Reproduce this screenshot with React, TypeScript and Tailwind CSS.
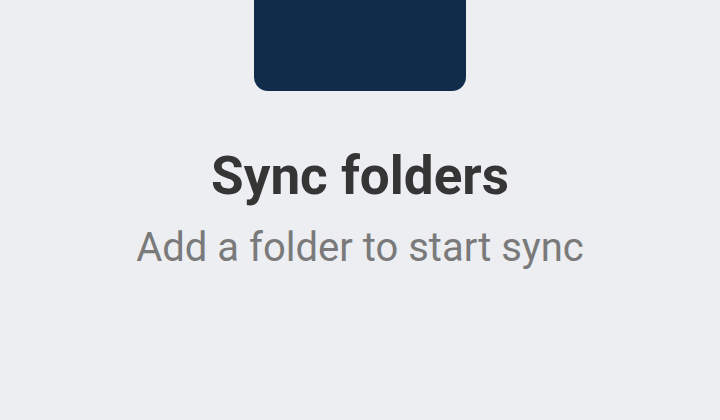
export default function App() {
  return (
    <div className="flex h-[420px] w-[720px] flex-col items-center overflow-hidden bg-[#edeef2] font-['Roboto',sans-serif]">
      <div className="h-[91px] w-[212px] shrink-0 rounded-b-[14px] bg-[#112b4b]" />

      <h1 className="mt-[53px] text-[53px] font-bold leading-[64px] text-[#353535]">
        Sync folders
      </h1>

      <p className="mt-[16px] text-[40px] leading-[48px] text-[#7a7a7a]">
        Add a folder to start sync
      </p>
    </div>
  );
}
